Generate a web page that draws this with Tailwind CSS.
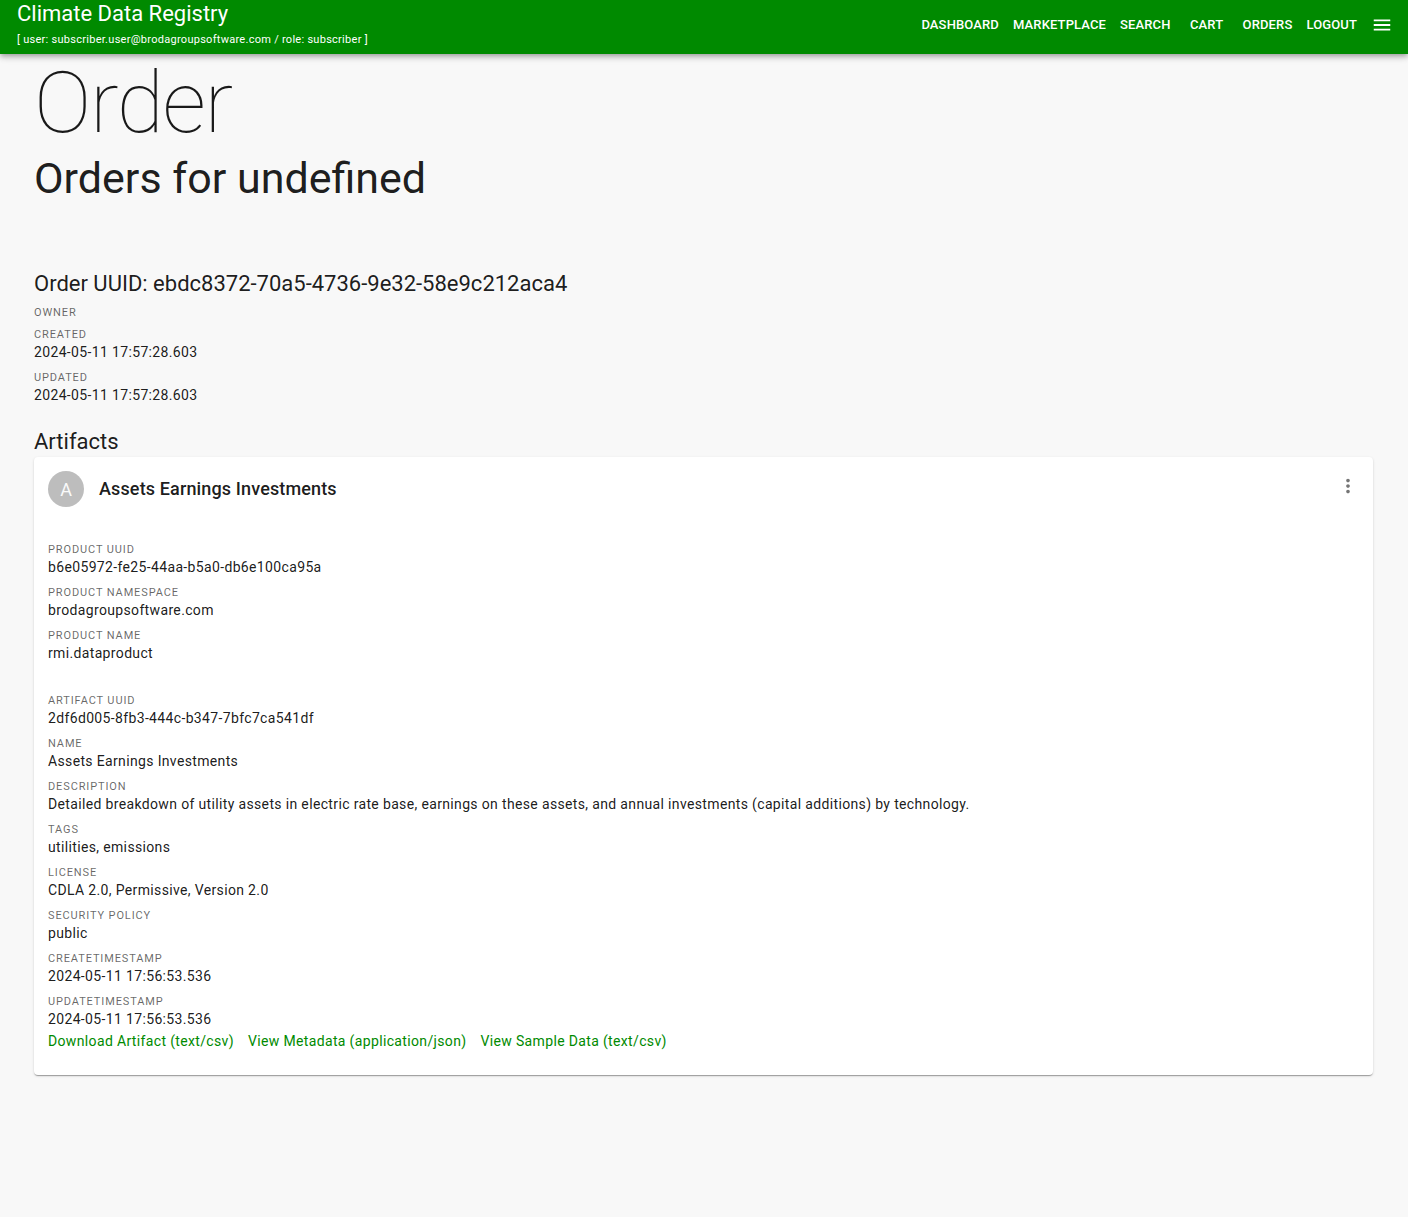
<!DOCTYPE html>
<html lang="en">
<head>
<meta charset="utf-8">
<meta name="viewport" content="width=device-width, initial-scale=1">
<title>Climate Data Registry</title>
<script src="https://cdn.jsdelivr.net/npm/@tailwindcss/browser@4"></script>
</head>
<body class="min-h-screen bg-[#f8f8f8] font-[Roboto,sans-serif] text-[14px] text-black/90">
<header class="flex h-[54px] items-start justify-between bg-[#008a00] pr-[15px] pl-[17px] text-white shadow-[0_2px_4px_-1px_rgba(0,0,0,0.2),0_4px_5px_0_rgba(0,0,0,0.14),0_1px_10px_0_rgba(0,0,0,0.12)]">
  <div>
    <div class="text-[22px] leading-[28px]">Climate Data Registry</div>
    <div class="text-[11px] leading-[24px] tracking-wide">[ user: subscriber.user@brodagroupsoftware.com / role: subscriber ]</div>
  </div>
  <nav class="flex h-[50px] items-center text-[13px] font-medium tracking-[0.01em]">
    <a href="#" class="px-[7px]">DASHBOARD</a>
    <a href="#" class="px-[7px]">MARKETPLACE</a>
    <a href="#" class="px-[7px]">SEARCH</a>
    <a href="#" class="min-w-[58px] px-[7px] text-center">CART</a>
    <a href="#" class="px-[7px]">ORDERS</a>
    <a href="#" class="px-[7px]">LOGOUT</a>
    <button type="button" aria-label="Menu" class="ml-[7px]">
      <svg class="size-[22px]" viewBox="0 0 24 24" fill="currentColor"><path d="M3 18h18v-2H3v2zm0-5h18v-2H3v2zm0-7v2h18V6H3z"/></svg>
    </button>
  </nav>
</header>
<main class="pr-[35px] pb-[60px] pl-[34px]">
  <h1 class="text-[86px] leading-[98px] font-thin tracking-[-0.015em]">Order</h1>
  <h2 class="text-[43px] leading-[52px]">Orders for undefined</h2>

  <section class="pt-[65px]">
    <h3 class="text-[22px] leading-[29px]">Order UUID: ebdc8372-70a5-4736-9e32-58e9c212aca4</h3>
    <dl>
      <dt class="mt-[7px] text-[11px] leading-[15px] tracking-[0.08em] text-black/60">OWNER</dt>
      <dd></dd>
      <dt class="mt-[7px] text-[11px] leading-[15px] tracking-[0.08em] text-black/60">CREATED</dt>
      <dd class="leading-[21px] tracking-wide">2024-05-11 17:57:28.603</dd>
      <dt class="mt-[7px] text-[11px] leading-[15px] tracking-[0.08em] text-black/60">UPDATED</dt>
      <dd class="leading-[21px] tracking-wide">2024-05-11 17:57:28.603</dd>
    </dl>
  </section>

  <section class="pt-[21px]">
    <h3 class="text-[22px] leading-[29px]">Artifacts</h3>
    <article class="mt-px rounded-[4px] bg-white pb-[23px] shadow-[0_2px_1px_-1px_rgba(0,0,0,0.2),0_1px_1px_0_rgba(0,0,0,0.14),0_1px_3px_0_rgba(0,0,0,0.12)]">
      <div class="flex items-center p-[14px]">
        <div class="mr-[15px] flex size-[36px] items-center justify-center rounded-full bg-[#bdbdbd] text-[18px] text-[#fafafa]">A</div>
        <h4 class="grow text-[18px] leading-[28px] font-medium tracking-[0.0075em]">Assets Earnings Investments</h4>
        <button type="button" aria-label="Settings" class="-mt-[6px] text-black/54">
          <svg class="size-[22px]" viewBox="0 0 24 24" fill="currentColor"><path d="M12 8c1.1 0 2-.9 2-2s-.9-2-2-2-2 .9-2 2 .9 2 2 2zm0 2c-1.1 0-2 .9-2 2s.9 2 2 2 2-.9 2-2-.9-2-2-2zm0 6c-1.1 0-2 .9-2 2s.9 2 2 2 2-.9 2-2-.9-2-2-2z"/></svg>
        </button>
      </div>
      <div class="px-[14px] pt-[14px]">
        <dl>
          <dt class="mt-[7px] text-[11px] leading-[15px] tracking-[0.08em] text-black/60">PRODUCT UUID</dt>
          <dd class="leading-[21px] tracking-wide">b6e05972-fe25-44aa-b5a0-db6e100ca95a</dd>
          <dt class="mt-[7px] text-[11px] leading-[15px] tracking-[0.08em] text-black/60">PRODUCT NAMESPACE</dt>
          <dd class="leading-[21px] tracking-wide">brodagroupsoftware.com</dd>
          <dt class="mt-[7px] text-[11px] leading-[15px] tracking-[0.08em] text-black/60">PRODUCT NAME</dt>
          <dd class="leading-[21px] tracking-wide">rmi.dataproduct</dd>
        </dl>
        <dl class="pt-[22px]">
          <dt class="mt-[7px] text-[11px] leading-[15px] tracking-[0.08em] text-black/60">ARTIFACT UUID</dt>
          <dd class="leading-[21px] tracking-wide">2df6d005-8fb3-444c-b347-7bfc7ca541df</dd>
          <dt class="mt-[7px] text-[11px] leading-[15px] tracking-[0.08em] text-black/60">NAME</dt>
          <dd class="leading-[21px] tracking-wide">Assets Earnings Investments</dd>
          <dt class="mt-[7px] text-[11px] leading-[15px] tracking-[0.08em] text-black/60">DESCRIPTION</dt>
          <dd class="leading-[21px] tracking-wide">Detailed breakdown of utility assets in electric rate base, earnings on these assets, and annual investments (capital additions) by technology.</dd>
          <dt class="mt-[7px] text-[11px] leading-[15px] tracking-[0.08em] text-black/60">TAGS</dt>
          <dd class="leading-[21px] tracking-wide">utilities, emissions</dd>
          <dt class="mt-[7px] text-[11px] leading-[15px] tracking-[0.08em] text-black/60">LICENSE</dt>
          <dd class="leading-[21px] tracking-wide">CDLA 2.0, Permissive, Version 2.0</dd>
          <dt class="mt-[7px] text-[11px] leading-[15px] tracking-[0.08em] text-black/60">SECURITY POLICY</dt>
          <dd class="leading-[21px] tracking-wide">public</dd>
          <dt class="mt-[7px] text-[11px] leading-[15px] tracking-[0.08em] text-black/60">CREATETIMESTAMP</dt>
          <dd class="leading-[21px] tracking-wide">2024-05-11 17:56:53.536</dd>
          <dt class="mt-[7px] text-[11px] leading-[15px] tracking-[0.08em] text-black/60">UPDATETIMESTAMP</dt>
          <dd class="leading-[21px] tracking-wide">2024-05-11 17:56:53.536</dd>
        </dl>
        <div class="flex flex-wrap gap-x-[14px] leading-[22px] tracking-wide text-[#008a00]">
          <a href="#">Download Artifact (text/csv)</a>
          <a href="#">View Metadata (application/json)</a>
          <a href="#">View Sample Data (text/csv)</a>
        </div>
      </div>
    </article>
  </section>
</main>
</body>
</html>
